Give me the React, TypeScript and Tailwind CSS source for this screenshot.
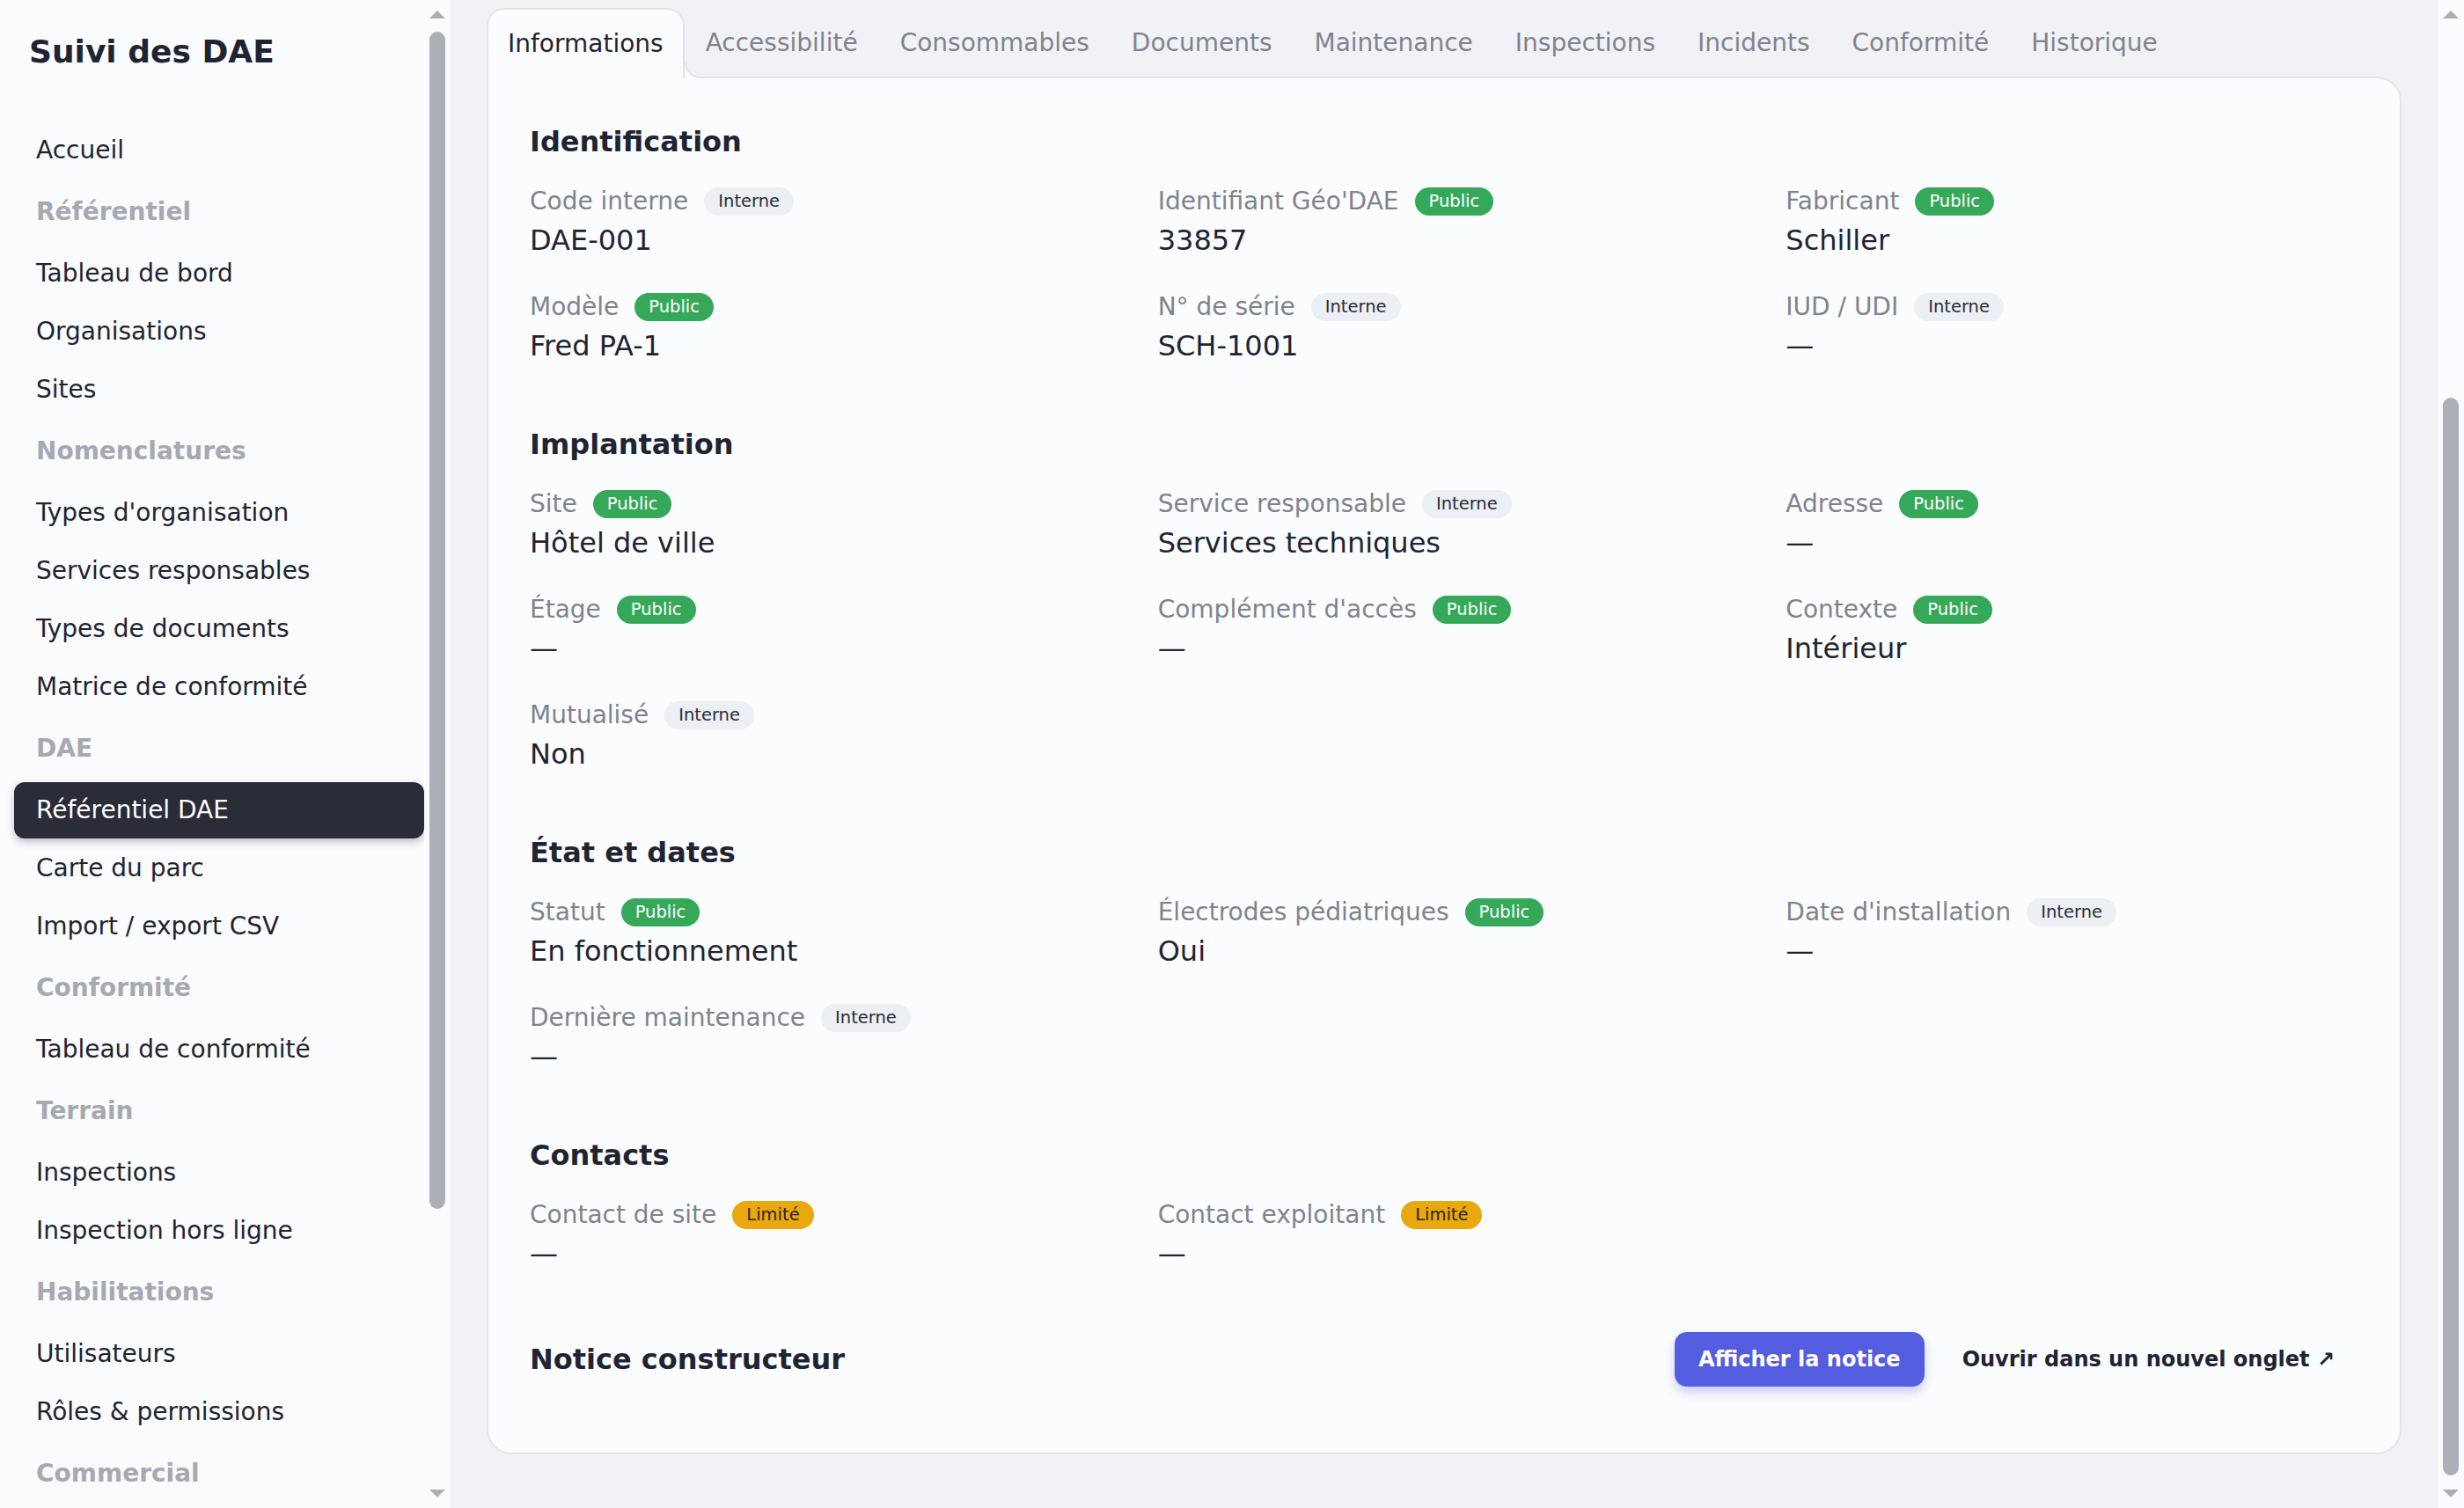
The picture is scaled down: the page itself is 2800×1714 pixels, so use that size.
import React from "react";

type Vis = "Public" | "Interne" | "Limité";

const navItems: { h?: boolean; l: string; active?: boolean }[] = [
  { l: "Accueil" },
  { h: true, l: "Référentiel" },
  { l: "Tableau de bord" },
  { l: "Organisations" },
  { l: "Sites" },
  { h: true, l: "Nomenclatures" },
  { l: "Types d'organisation" },
  { l: "Services responsables" },
  { l: "Types de documents" },
  { l: "Matrice de conformité" },
  { h: true, l: "DAE" },
  { l: "Référentiel DAE", active: true },
  { l: "Carte du parc" },
  { l: "Import / export CSV" },
  { h: true, l: "Conformité" },
  { l: "Tableau de conformité" },
  { h: true, l: "Terrain" },
  { l: "Inspections" },
  { l: "Inspection hors ligne" },
  { h: true, l: "Habilitations" },
  { l: "Utilisateurs" },
  { l: "Rôles & permissions" },
  { h: true, l: "Commercial" },
];

const tabs = [
  "Informations",
  "Accessibilité",
  "Consommables",
  "Documents",
  "Maintenance",
  "Inspections",
  "Incidents",
  "Conformité",
  "Historique",
];

const sections: { title: string; fields: { label: string; vis: Vis; value: string }[] }[] = [
  {
    title: "Identification",
    fields: [
      { label: "Code interne", vis: "Interne", value: "DAE-001" },
      { label: "Identifiant Géo'DAE", vis: "Public", value: "33857" },
      { label: "Fabricant", vis: "Public", value: "Schiller" },
      { label: "Modèle", vis: "Public", value: "Fred PA-1" },
      { label: "N° de série", vis: "Interne", value: "SCH-1001" },
      { label: "IUD / UDI", vis: "Interne", value: "—" },
    ],
  },
  {
    title: "Implantation",
    fields: [
      { label: "Site", vis: "Public", value: "Hôtel de ville" },
      { label: "Service responsable", vis: "Interne", value: "Services techniques" },
      { label: "Adresse", vis: "Public", value: "—" },
      { label: "Étage", vis: "Public", value: "—" },
      { label: "Complément d'accès", vis: "Public", value: "—" },
      { label: "Contexte", vis: "Public", value: "Intérieur" },
      { label: "Mutualisé", vis: "Interne", value: "Non" },
    ],
  },
  {
    title: "État et dates",
    fields: [
      { label: "Statut", vis: "Public", value: "En fonctionnement" },
      { label: "Électrodes pédiatriques", vis: "Public", value: "Oui" },
      { label: "Date d'installation", vis: "Interne", value: "—" },
      { label: "Dernière maintenance", vis: "Interne", value: "—" },
    ],
  },
  {
    title: "Contacts",
    fields: [
      { label: "Contact de site", vis: "Limité", value: "—" },
      { label: "Contact exploitant", vis: "Limité", value: "—" },
    ],
  },
];

function Badge({ vis }: { vis: Vis }) {
  const cls =
    vis === "Public"
      ? "bg-[#36a85a] text-white"
      : vis === "Limité"
      ? "bg-[#e9a90e] text-[#2a2200]"
      : "bg-[#eceff3] text-[#2a2d38]";
  return (
    <span className={`h-[32px] px-[16px] rounded-full flex items-center text-[19.5px] leading-none ${cls}`}>
      {vis}
    </span>
  );
}

function ArrowUp() {
  return <div className="w-0 h-0 border-x-[9px] border-x-transparent border-b-[9px] border-b-[#adafb8]" />;
}
function ArrowDown() {
  return <div className="w-0 h-0 border-x-[9px] border-x-transparent border-t-[9px] border-t-[#adafb8]" />;
}

export default function App() {
  return (
    <div className="w-[2800px] h-[1714px] overflow-hidden flex bg-[#f0f2f5] font-['DejaVu_Sans','Liberation_Sans',sans-serif] text-[#1f2433]">
      {/* Sidebar */}
      <aside className="w-[512px] h-full flex bg-[#fafbfd] shrink-0">
        <div className="flex-1 overflow-hidden pt-[35px]">
          <div className="pl-[33px] h-[48px] leading-[48px] text-[36px] font-bold text-[#1f2433]">Suivi des DAE</div>
          <nav className="mt-[56px] pl-[16px] flex flex-col gap-[2px]">
            {navItems.map((it, i) =>
              it.h ? (
                <div key={i} className="h-[72px] px-[25px] flex items-center text-[28px] font-bold text-[#a6a9b3]">
                  {it.l}
                </div>
              ) : (
                <div
                  key={i}
                  className={`h-[64px] px-[25px] flex items-center text-[28px] rounded-[12px] ${
                    it.active
                      ? "bg-[#2a2c38] text-white shadow-[0_4px_8px_rgba(20,22,35,0.25)]"
                      : "text-[#1f2433]"
                  }`}
                >
                  {it.l}
                </div>
              )
            )}
          </nav>
        </div>
        <div className="w-[30px] h-full flex flex-col items-center">
          <div className="mt-[12px]">
            <ArrowUp />
          </div>
          <div className="mt-[15px] w-[18px] h-[1338px] rounded-full bg-[#adafb8]" />
          <div className="mt-[319px]">
            <ArrowDown />
          </div>
        </div>
      </aside>

      {/* Main */}
      <main className="flex-1 h-full px-[41px] pt-[9px] flex flex-col">
        <div className="flex relative z-10 -mb-[2px]">
          {tabs.map((t, i) =>
            i === 0 ? (
              <div
                key={t}
                className="relative h-[80px] px-[22px] flex items-center text-[28px] text-[#1f2433] bg-[#fbfcfe] border-2 border-b-0 border-[#e2e4ea] rounded-t-[20px]"
              >
                {t}
                <span className="absolute bottom-0 right-[-20px] w-[18px] h-[18px] bg-[#fbfcfe]">
                  <span className="block w-full h-full bg-[#f0f2f5] border-l-2 border-b-2 border-[#e2e4ea] rounded-bl-[18px]" />
                </span>
              </div>
            ) : (
              <div
                key={t}
                className="h-[80px] px-[22px] flex items-center text-[28px] text-[#80838e] border-2 border-transparent"
              >
                {t}
              </div>
            )
          )}
        </div>

        <section className="bg-[#fbfcfe] border-2 border-[#e2e4ea] rounded-tr-[28px] rounded-b-[28px] pt-[48px] pb-[74px] px-[47px] flex flex-col gap-[66px]">
          {sections.map((s) => (
            <div key={s.title}>
              <h2 className="h-[48px] leading-[48px] text-[32px] font-bold text-[#1f2433]">{s.title}</h2>
              <div className="mt-[24px] grid grid-cols-3 gap-x-[63px] gap-y-[34px]">
                {s.fields.map((f) => (
                  <div key={f.label} className="flex flex-col">
                    <div className="h-[40px] flex items-center gap-[18px]">
                      <span className="text-[28px] text-[#80838e]">{f.label}</span>
                      <Badge vis={f.vis} />
                    </div>
                    <div className="mt-[2px] h-[44px] leading-[44px] text-[32px] text-[#1f2433]">{f.value}</div>
                  </div>
                ))}
              </div>
            </div>
          ))}
          <div className="flex items-center justify-between h-[64px]">
            <h2 className="h-[48px] leading-[48px] text-[32px] font-bold text-[#1f2433]">Notice constructeur</h2>
            <div className="flex items-center gap-[16px]">
              <button className="h-[62px] px-[27px] rounded-[14px] bg-[#545ce0] text-white text-[24px] font-bold shadow-[0_6px_12px_rgba(84,92,224,0.3)]">
                Afficher la notice
              </button>
              <button className="h-[62px] px-[27px] text-[24px] font-bold text-[#1f2433]">
                Ouvrir dans un nouvel onglet ↗
              </button>
            </div>
          </div>
        </section>
      </main>

      {/* Page scrollbar */}
      <div className="w-[30px] h-full bg-[#fafbfd] flex flex-col items-center shrink-0">
        <div className="mt-[12px]">
          <ArrowUp />
        </div>
        <div className="mt-[431px] w-[18px] h-[1225px] rounded-full bg-[#adafb8]" />
        <div className="mt-[16px]">
          <ArrowDown />
        </div>
      </div>
    </div>
  );
}
